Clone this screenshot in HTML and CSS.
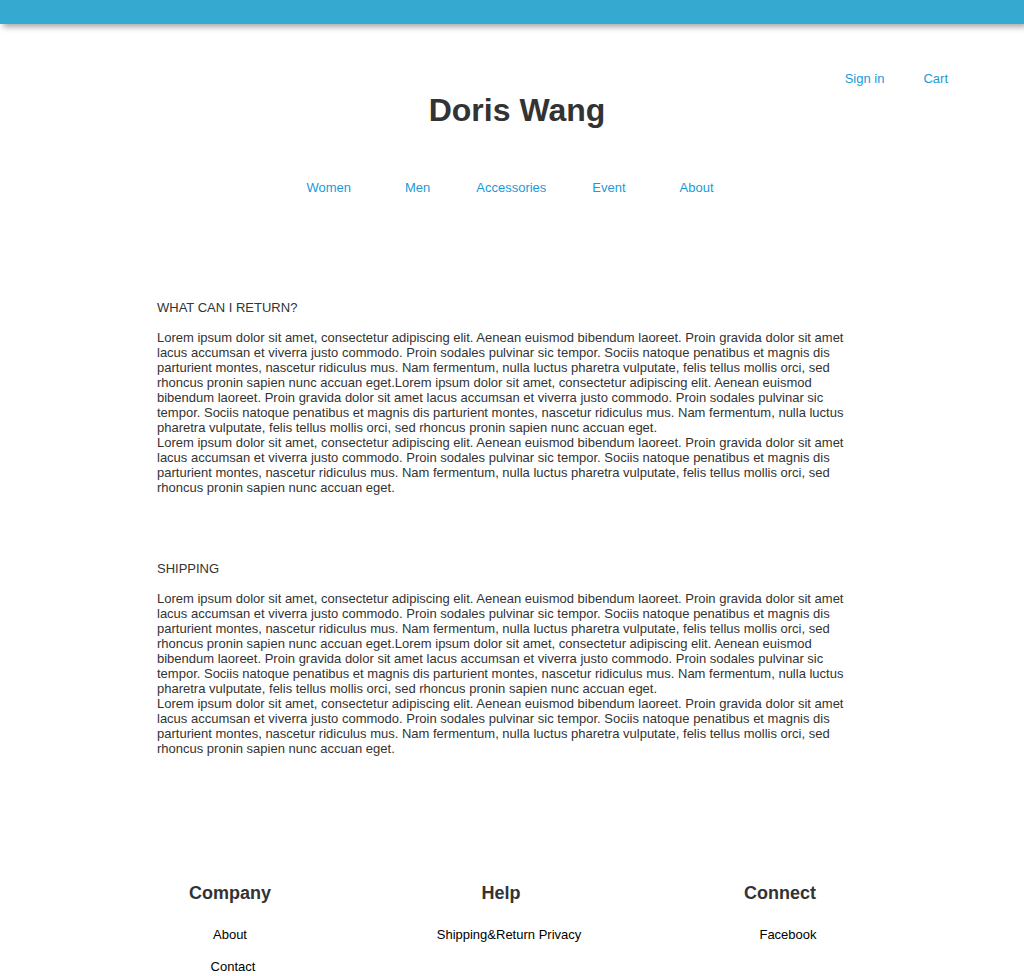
FILE: index.html
```html
<!DOCTYPE html>
<html lang="en">
<head>
<meta charset="utf-8">
<title>Doris Wang</title>
<link rel="stylesheet" href="styles.css">
</head>
<body>
<div class="topbar"></div>
<header class="header">
  <div class="user-links">
    <a href="#">Sign in</a>
    <a href="#">Cart</a>
  </div>
  <h1 class="title">Doris Wang</h1>
  <nav class="nav">
    <a href="#" class="nav-women">Women</a>
    <a href="#">Men</a>
    <a href="#">Accessories</a>
    <a href="#">Event</a>
    <a href="#" class="nav-about">About</a>
  </nav>
</header>
<main class="content">
  <section class="section">
    <h2 class="section-title">WHAT CAN I RETURN?</h2>
    <p class="section-text">Lorem ipsum dolor sit amet, consectetur adipiscing elit. Aenean euismod bibendum laoreet. Proin gravida dolor sit amet lacus accumsan et viverra justo commodo. Proin sodales pulvinar sic tempor. Sociis natoque penatibus et magnis dis parturient montes, nascetur ridiculus mus. Nam fermentum, nulla luctus pharetra vulputate, felis tellus mollis orci, sed rhoncus pronin sapien nunc accuan eget.Lorem ipsum dolor sit amet, consectetur adipiscing elit. Aenean euismod bibendum laoreet. Proin gravida dolor sit amet lacus accumsan et viverra justo commodo. Proin sodales pulvinar sic tempor. Sociis natoque penatibus et magnis dis parturient montes, nascetur ridiculus mus. Nam fermentum, nulla luctus pharetra vulputate, felis tellus mollis orci, sed rhoncus pronin sapien nunc accuan eget.<br>Lorem ipsum dolor sit amet, consectetur adipiscing elit. Aenean euismod bibendum laoreet. Proin gravida dolor sit amet lacus accumsan et viverra justo commodo. Proin sodales pulvinar sic tempor. Sociis natoque penatibus et magnis dis parturient montes, nascetur ridiculus mus. Nam fermentum, nulla luctus pharetra vulputate, felis tellus mollis orci, sed rhoncus pronin sapien nunc accuan eget.</p>
  </section>
  <section class="section">
    <h2 class="section-title">SHIPPING</h2>
    <p class="section-text">Lorem ipsum dolor sit amet, consectetur adipiscing elit. Aenean euismod bibendum laoreet. Proin gravida dolor sit amet lacus accumsan et viverra justo commodo. Proin sodales pulvinar sic tempor. Sociis natoque penatibus et magnis dis parturient montes, nascetur ridiculus mus. Nam fermentum, nulla luctus pharetra vulputate, felis tellus mollis orci, sed rhoncus pronin sapien nunc accuan eget.Lorem ipsum dolor sit amet, consectetur adipiscing elit. Aenean euismod bibendum laoreet. Proin gravida dolor sit amet lacus accumsan et viverra justo commodo. Proin sodales pulvinar sic tempor. Sociis natoque penatibus et magnis dis parturient montes, nascetur ridiculus mus. Nam fermentum, nulla luctus pharetra vulputate, felis tellus mollis orci, sed rhoncus pronin sapien nunc accuan eget.<br>Lorem ipsum dolor sit amet, consectetur adipiscing elit. Aenean euismod bibendum laoreet. Proin gravida dolor sit amet lacus accumsan et viverra justo commodo. Proin sodales pulvinar sic tempor. Sociis natoque penatibus et magnis dis parturient montes, nascetur ridiculus mus. Nam fermentum, nulla luctus pharetra vulputate, felis tellus mollis orci, sed rhoncus pronin sapien nunc accuan eget.</p>
  </section>
</main>
<footer class="footer">
  <div class="footer-col">
    <h3 class="footer-title">Company</h3>
    <ul class="footer-links">
      <li><a href="#">About</a></li>
      <li><a href="#" class="shift">Contact</a></li>
    </ul>
  </div>
  <div class="footer-col">
    <h3 class="footer-title">Help</h3>
    <ul class="footer-links footer-links-offset">
      <li><a href="#">Shipping&amp;Return Privacy</a></li>
    </ul>
  </div>
  <div class="footer-col">
    <h3 class="footer-title">Connect</h3>
    <ul class="footer-links footer-links-offset">
      <li><a href="#">Facebook</a></li>
    </ul>
  </div>
</footer>
</body>
</html>
```

FILE: styles.css
```css
* {
  box-sizing: border-box;
}

body {
  margin: 0;
  font-family: "Liberation Sans", Arial, sans-serif;
  font-size: 13px;
  line-height: 15px;
  color: #333333;
  background: #ffffff;
}

a {
  text-decoration: none;
}

.topbar {
  height: 24px;
  background: #35a9cf;
  box-shadow: 3px 3px 6px rgba(0, 0, 0, 0.35);
}

.header {
  padding-top: 47px;
}

.user-links {
  display: flex;
  justify-content: flex-end;
  gap: 39px;
  padding-right: 76px;
}

.user-links a {
  color: #1a9bd7;
}

.title {
  margin: 6px 0 0;
  padding-left: 10px;
  text-align: center;
  font-size: 32px;
  line-height: 37px;
  font-weight: bold;
  color: #333333;
}

.nav {
  display: flex;
  justify-content: center;
  gap: 46px;
  margin-top: 51px;
  padding-right: 4px;
}

.nav a {
  color: #1a9bd7;
}

.nav .nav-women {
  margin-right: 8px;
}

.nav .nav-about {
  margin-left: 8px;
}

.content {
  margin-top: 105px;
  padding-left: 157px;
  width: 857px;
}

.section + .section {
  margin-top: 66px;
}

.section-title {
  margin: 0;
  font-size: 13px;
  line-height: 15px;
  font-weight: normal;
  color: #333333;
}

.section-text {
  margin: 15px 0 0;
  color: #333333;
}

.footer {
  display: grid;
  grid-template-columns: 200px 200px 216px;
  column-gap: 71px;
  padding-left: 130px;
  margin-top: 127px;
  text-align: center;
}

.footer-title {
  margin: 0;
  font-size: 18px;
  line-height: 20px;
  font-weight: bold;
  color: #333333;
}

.footer-links {
  list-style: none;
  margin: 24px 0 0;
  padding: 0;
}

.footer-links li {
  line-height: 15px;
  margin-bottom: 17px;
}

.footer-links a {
  color: #000000;
}

.footer-links .shift {
  padding-left: 6px;
}

.footer-links-offset {
  padding-left: 16px;
}
```
